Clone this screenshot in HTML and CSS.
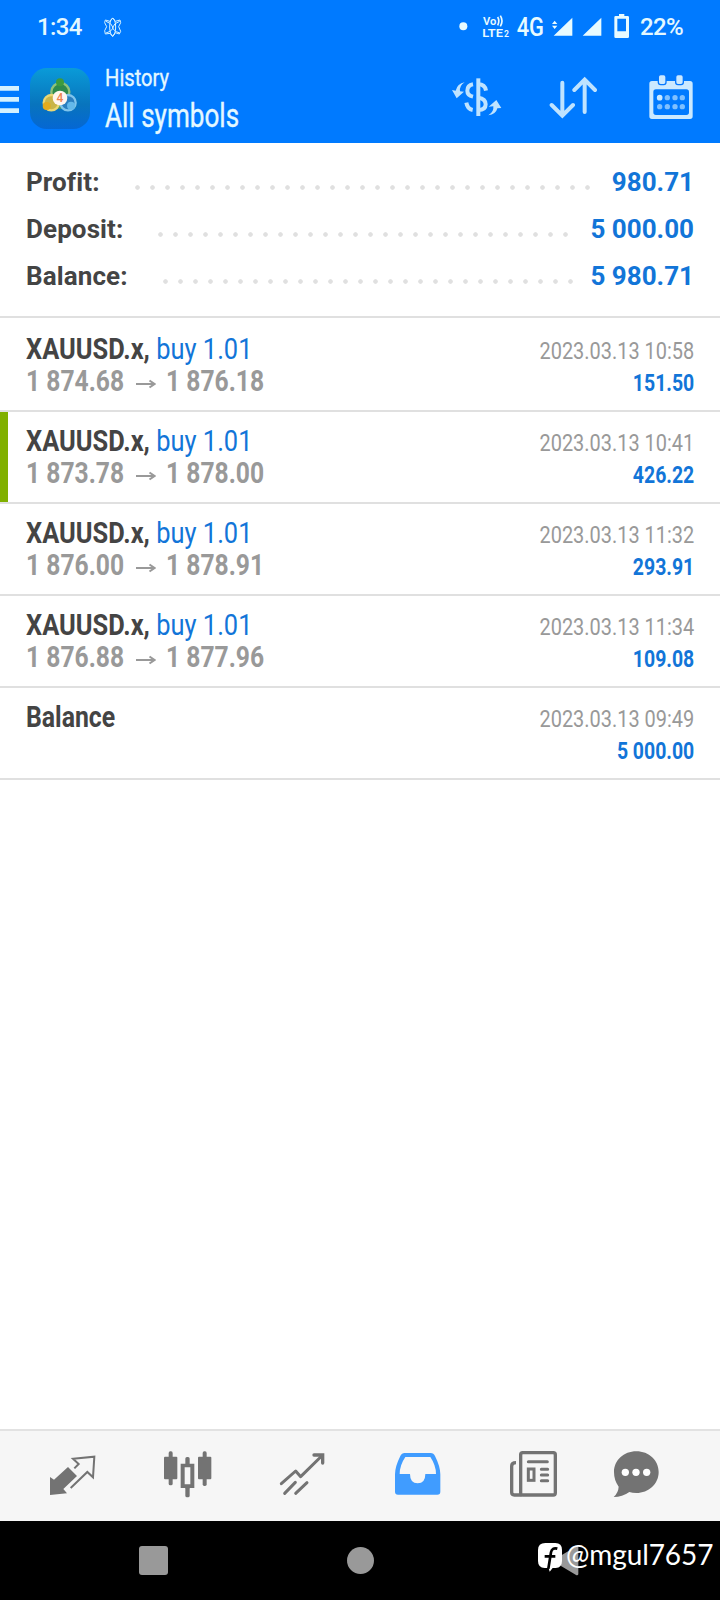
FILE: index.html
```
<!DOCTYPE html>
<html lang="en">
<head>
<meta charset="utf-8">
<title>History</title>
<link rel="stylesheet" href="styles.css">
</head>
<body>
<div class="screen">
  <header class="top">
    <div class="status">
      <span class="clock">1:34</span>
      <svg class="atom" width="20" height="22" viewBox="310 46 60 66" fill="none" stroke="#d9f4ff" stroke-width="3">
        <path d="M339 52l8 10 14-4 2 8-6 12 6 14-4 8-12-4-8 12-8-10-14 2-2-10 6-12-6-12 2-8 14 4z"/>
        <ellipse cx="339" cy="79" rx="9" ry="26"/>
        <path d="M319 62q18 6 20 17t-20 18M360 62q-18 6-20 17t20 18"/>
      </svg>
      <svg class="status-icons" width="180" height="34" viewBox="50 30 540 102" fill="#e8fbff">
        <circle cx="69" cy="79" r="12"/>
        <g fill="none" stroke="#e8fbff" stroke-width="5">
          <path d="M172 51q7 12 0 25M180 47q10 16 0 32"/>
        </g>
        <text class="volte" x="128" y="76" textLength="40" lengthAdjust="spacingAndGlyphs">Vo</text>
        <text class="volte" x="126" y="111" textLength="62" lengthAdjust="spacingAndGlyphs">LTE</text>
        <text class="volte-no" x="191" y="111">2</text>
        <text class="net" x="229" y="108" textLength="82" lengthAdjust="spacingAndGlyphs">4G</text>
        <path d="M343 62l8 10h-16zM343 87l8-10h-16zM396 53v54h-56zM483 53v54h-56z"/>
        <path fill-rule="evenodd" d="M536 42h16v6h10q4 0 4 4v58q0 4-4 4h-36q-4 0-4-4V52q0-4 4-4h10zM531 56v38h26V56z"/>
      </svg>
      <span class="battery">22%</span>
    </div>
    <div class="bar">
      <svg class="menu" width="20" height="30" viewBox="0 252 60 90" fill="#d4f1ff"><path d="M0 258h57v14H0zM0 291h57v14H0zM0 325h57v14H0z"/></svg>
      <svg class="logo" width="60" height="61" viewBox="90 204 180 183">
        <defs>
          <linearGradient id="bg" x1="0" y1="0" x2="0" y2="1"><stop offset="0" stop-color="#0a9bd8"/><stop offset=".6" stop-color="#0874bd"/><stop offset="1" stop-color="#0567d4"/></linearGradient>
        </defs>
        <rect x="90" y="204" width="180" height="183" rx="50" fill="url(#bg)"/>
        <path d="M180 250l-38 66h76z" fill="#4d9a63" stroke="#4d9a63" stroke-width="20" stroke-linejoin="round"/>
        <circle cx="181" cy="276" r="27" fill="#2f8a4c" stroke="#8fc27a" stroke-width="7"/>
        <circle cx="154" cy="308" r="23" fill="#c9b548" stroke="#ead775" stroke-width="7"/>
        <circle cx="204" cy="308" r="23" fill="#2b7fc0" stroke="#7fc4ec" stroke-width="7"/>
        <circle cx="180" cy="247" r="12" fill="#3d9b3f"/>
        <circle cx="140" cy="318" r="12" fill="#e3ab1c"/>
        <circle cx="213" cy="317" r="12" fill="#63b8ea"/>
        <circle cx="180" cy="294" r="22" fill="#fff6f0"/>
        <text class="four" x="180" y="307" text-anchor="middle">4</text>
      </svg>
      <div class="titles">
        <div class="sub"><span>History</span></div>
        <div class="title"><span>All symbols</span></div>
      </div>
      <svg class="act-dollar" width="54" height="50" viewBox="32 216 162 150" fill="none" stroke="#bfe3ff" stroke-width="12">
        <path d="M117 235v113" stroke-width="12"/>
        <path d="M101 253q-17 3-17 19 0 14 17 18M81 308q3 19 19 22M117 253q20 0 23 19M117 293q22 3 22 20t-22 17"/>
        <path fill="#bfe3ff" stroke="none" d="M76 247q-16 10-14 27l12 1-22 20-14-25 11 2q5-21 27-25zM147 346q17-10 15-27l-14 1 23-20 15 24-12 1q-4 18-27 21z"/>
      </svg>
      <svg class="act-sort" width="48" height="44" viewBox="329 228 144 132" fill="none" stroke="#bfe3ff" stroke-width="12" stroke-linecap="round">
        <path d="M369 248v98M337 315l32 32 32-32M436 336V240M405 270l31-31 31 31"/>
      </svg>
      <svg class="act-cal" width="46" height="48" viewBox="624 218 138 144" fill="#cbe9ff">
        <path fill-rule="evenodd" d="M636 242h114q8 0 8 8v98q0 8-8 8H636q-8 0-8-8v-98q0-8 8-8zM648 267q-8 0-8 8v61q0 8 8 8h91q8 0 8-8v-61q0-8-8-8z"/>
        <rect x="655" y="223" width="23" height="30" rx="7" stroke="#0578ff" stroke-width="4"/><rect x="707" y="223" width="23" height="30" rx="7" stroke="#0578ff" stroke-width="4"/>
        <circle cx="659" cy="292" r="8.500"/>
        <g fill="#7fc0ff"><circle cx="682" cy="292" r="8"/><circle cx="705" cy="292" r="8"/><circle cx="727" cy="292" r="8"/><circle cx="659" cy="319" r="8"/><circle cx="682" cy="319" r="8"/><circle cx="705" cy="319" r="8"/><circle cx="727" cy="319" r="8"/></g>
      </svg>
    </div>
  </header>

  <section class="summary">
    <div class="sum-row"><span class="label">Profit:</span><span class="dots dots-long"></span><span class="amount">980.71</span></div>
    <div class="sum-row"><span class="label">Deposit:</span><span class="dots"></span><span class="amount">5 000.00</span></div>
    <div class="sum-row"><span class="label">Balance:</span><span class="dots"></span><span class="amount">5 980.71</span></div>
  </section>

  <main class="list">
    <div class="row">
      <div class="left"><div class="name"><b>XAUUSD.x,</b> <span>buy 1.01</span></div><div class="prices"><span class="p">1 874.68</span><svg class="arrow" width="20" height="10" viewBox="0 0 20 10"><path d="M0 5h18M13.500 1.500L18.500 5l-5 3.500"/></svg><span class="p">1 876.18</span></div></div>
      <div class="right"><div class="date">2023.03.13 10:58</div><div class="gain">151.50</div></div>
    </div>
    <div class="row marked">
      <div class="left"><div class="name"><b>XAUUSD.x,</b> <span>buy 1.01</span></div><div class="prices"><span class="p">1 873.78</span><svg class="arrow" width="20" height="10" viewBox="0 0 20 10"><path d="M0 5h18M13.500 1.500L18.500 5l-5 3.500"/></svg><span class="p">1 878.00</span></div></div>
      <div class="right"><div class="date">2023.03.13 10:41</div><div class="gain">426.22</div></div>
    </div>
    <div class="row">
      <div class="left"><div class="name"><b>XAUUSD.x,</b> <span>buy 1.01</span></div><div class="prices"><span class="p">1 876.00</span><svg class="arrow" width="20" height="10" viewBox="0 0 20 10"><path d="M0 5h18M13.500 1.500L18.500 5l-5 3.500"/></svg><span class="p">1 878.91</span></div></div>
      <div class="right"><div class="date">2023.03.13 11:32</div><div class="gain">293.91</div></div>
    </div>
    <div class="row">
      <div class="left"><div class="name"><b>XAUUSD.x,</b> <span>buy 1.01</span></div><div class="prices"><span class="p">1 876.88</span><svg class="arrow" width="20" height="10" viewBox="0 0 20 10"><path d="M0 5h18M13.500 1.500L18.500 5l-5 3.500"/></svg><span class="p">1 877.96</span></div></div>
      <div class="right"><div class="date">2023.03.13 11:34</div><div class="gain">109.08</div></div>
    </div>
    <div class="row">
      <div class="left"><div class="name name-balance"><b>Balance</b></div></div>
      <div class="right"><div class="date">2023.03.13 09:49</div><div class="gain">5 000.00</div></div>
    </div>
  </main>

  <nav class="tabs">
    <svg width="50" height="50" viewBox="144 90 150 150" fill="none" stroke="#737373" stroke-width="6">
      <path fill="#737373" stroke="none" d="M150 171l12 8 42-38 27 27-41 39 11 13-51 5z"/>
      <path d="M223 145l13-13-17-16 64-6-4 62-17-16-50 48"/>
    </svg>
    <svg width="50" height="50" viewBox="489 90 150 150" fill="#737373">
      <rect x="492" y="110" width="40" height="68" rx="3"/><rect x="506" y="94" width="12" height="102" rx="5"/>
      <rect x="594" y="110" width="40" height="68" rx="3"/><rect x="608" y="94" width="12" height="104" rx="5"/>
      <rect x="556" y="111" width="13" height="26" rx="5"/><rect x="556" y="200" width="13" height="32" rx="5"/>
      <path fill-rule="evenodd" d="M542 131h41v73h-41zM554 142v51h17v-51z"/>
    </svg>
    <svg width="50" height="50" viewBox="834 90 150 150" fill="none" stroke="#737373" stroke-width="9" stroke-linecap="round" stroke-linejoin="round">
      <path d="M844 191l43-38 15 17 63-62"/><path d="M942 105h26v24" stroke-linejoin="miter" stroke-width="10"/><path d="M886 187l-32 33M921 188l-34 32"/>
    </svg>
    <svg width="50" height="50" viewBox="99 90 150 150">
      <path fill="#409cff" fill-rule="evenodd" d="M134 99h78q9 0 13 9 16 32 16 55v52q0 9-9 9H114q-9 0-9-9v-52q0-23 16-55 4-9 13-9zM136 111q-17 25-17 51h31q0 28 23 28t23-28h32q0-26-17-51z"/>
    </svg>
    <svg width="50" height="50" viewBox="444 90 150 150" fill="none" stroke="#737373" stroke-width="10">
      <rect x="482" y="98" width="104" height="127" rx="6"/>
      <path d="M468 128q-13 0-13 10v79q0 8 8 8h22"/>
      <path d="M505 125h57M544 148h19M544 165h19M544 182h19" stroke-linecap="round" stroke-width="9"/>
      <rect x="505" y="147" width="17" height="34" stroke-width="9"/>
    </svg>
    <svg class="chat" width="50" height="50" viewBox="753 90 150 150">
      <path fill="#737373" d="M829 94c38 0 67 27 67 62 0 36-30 63-67 63q-12 0-21-3-21 15-47 15 14-13 15-31-14-19-14-44c0-35 29-62 67-62z"/>
      <g fill="#fff"><circle cx="796" cy="157" r="11"/><circle cx="828" cy="157" r="11"/><circle cx="860" cy="157" r="11"/></g>
    </svg>
  </nav>

  <footer class="sys">
    <span class="recents"></span>
    <span class="home"></span>
    <svg class="back" width="18" height="32" viewBox="604 374 54 96"><path fill="#999" d="M656 380v82q-2 5-8 1l-64-38q-6-4 0-8l64-38q6-4 8 1z"/></svg>
    <div class="mark">
      <svg width="24" height="29" viewBox="536 368 72 87">
        <path fill="#fff" d="M558 368h30q20 0 20 21v33q0 20-19 21h-9l-9 11-3-11h-12q-20-1-20-21v-33q0-21 22-21z"/>
        <path fill="none" stroke="#000" stroke-width="8" d="M594 385q-16-4-19 11l-8 49M556 408h32"/>
      </svg><span class="handle">@mgul7657</span>
    </div>
  </footer>
</div>
</body>
</html>
```
FILE: styles.css
```
body { margin: 0; background: #fff; font-family: Roboto, "Liberation Sans", sans-serif; }
.screen { width: 720px; height: 1600px; display: flex; flex-direction: column; overflow: hidden; background: #fff; }
svg { display: block; flex: none; }

.top { background: #007aff; height: 143px; flex: none; color: #e4f8ff; }
.status { height: 54px; display: flex; align-items: center; padding-left: 37px; box-sizing: border-box; }
.clock, .battery { font-size: 24px; font-weight: 500; line-height: 54px; letter-spacing: -.6px; }
.clock { width: 66px; }
.status-icons { margin-left: 334px; }
.battery { margin-left: 3px; }
.volte { font-size: 34px; font-weight: 600; }
.volte-no { font-size: 26px; font-weight: 600; }
.net { font-size: 78px; font-weight: 500; }
.four { font-size: 36px; font-weight: 500; fill: #ee8450; }

.bar { display: flex; height: 89px; align-items: flex-start; padding-top: 14px; box-sizing: border-box; }
.menu { margin-top: 16px; }
.logo { margin-left: 10px; }
.titles { margin-left: 15px; width: 345px; white-space: nowrap; }
.titles span { display: inline-block; transform-origin: 0 50%; -webkit-text-stroke: .35px #e4f8ff; }
.sub { font-size: 24px; line-height: 28px; margin-top: -4px; }
.sub span { transform: scaleX(.84); }
.title { font-size: 33px; line-height: 40px; margin-top: 4px; }
.title span { transform: scaleX(.79); }
.act-dollar { margin-top: 4px; }
.act-sort { margin: 8px 0 0 45px; }
.act-cal { margin: 5px 0 0 51px; }

.summary { height: 173px; flex: none; padding: 16px 26px 0 26px; box-sizing: border-box; }
.sum-row { display: flex; height: 47px; line-height: 47px; font-size: 26px; font-weight: 700; white-space: nowrap; }
.label { color: #444; letter-spacing: .1px; }
.dots { width: 420px; height: 5px; margin: 26px 0 0 30px; background: radial-gradient(circle at center, #e0e0e0 1.9px, transparent 2.6px) 0 0 / 15px 5px repeat-x; }
.dots-long { width: 465px; }
.amount { color: #1275d8; margin-left: auto; }

.list { flex: 1; border-top: 2px solid #e0e0e0; padding-top: 2px; }
.row { display: flex; justify-content: space-between; height: 92px; box-sizing: border-box; border-bottom: 2px solid #e0e0e0; padding: 13px 26px 0; white-space: nowrap; line-height: 32px; }
.marked { box-shadow: inset 8px 0 #80b000; }
.name { font-size: 29px; color: #1275d8; transform-origin: 0 50%; transform: scaleX(.877); }
.name-balance { transform: scaleX(.855); }
.name b { color: #444; }
.prices { display: flex; align-items: center; font-size: 29px; font-weight: 700; color: #999; }
.p { width: 98px; transform-origin: 0 50%; transform: scaleX(.85); }
.arrow { margin: 6px 10px 0 12px; fill: none; stroke: #999; stroke-width: 2; }
.right { text-align: right; padding-top: 2px; }
.date, .gain { font-size: 24px; transform-origin: 100% 50%; }
.date { color: #999; transform: scaleX(.831); }
.gain { color: #1275d8; font-weight: 700; transform: scaleX(.81); }

.tabs { height: 92px; flex: none; box-sizing: border-box; border-top: 2px solid #e2e2e2; background: #f6f6f6; display: flex; gap: 65px; padding: 19px 0 0 48px; }
.chat { margin-left: -12px; }

.sys { height: 79px; flex: none; background: #000; position: relative; display: flex; padding-left: 139px; box-sizing: border-box; }
.recents { width: 29px; height: 29px; margin-top: 25px; border-radius: 3px; background: #999; }
.home { width: 27px; height: 27px; margin: 26px 0 0 179px; border-radius: 50%; background: #999; }
.back { margin: 24px 0 0 187px; }
.mark { position: absolute; left: 538px; top: 21px; display: flex; color: #fff; }
.mark svg { margin-top: 1px; }
.handle { font-family: Lato, sans-serif; font-size: 28px; line-height: 34px; margin: -5px 0 0 4px; letter-spacing: -.1px; }
```
